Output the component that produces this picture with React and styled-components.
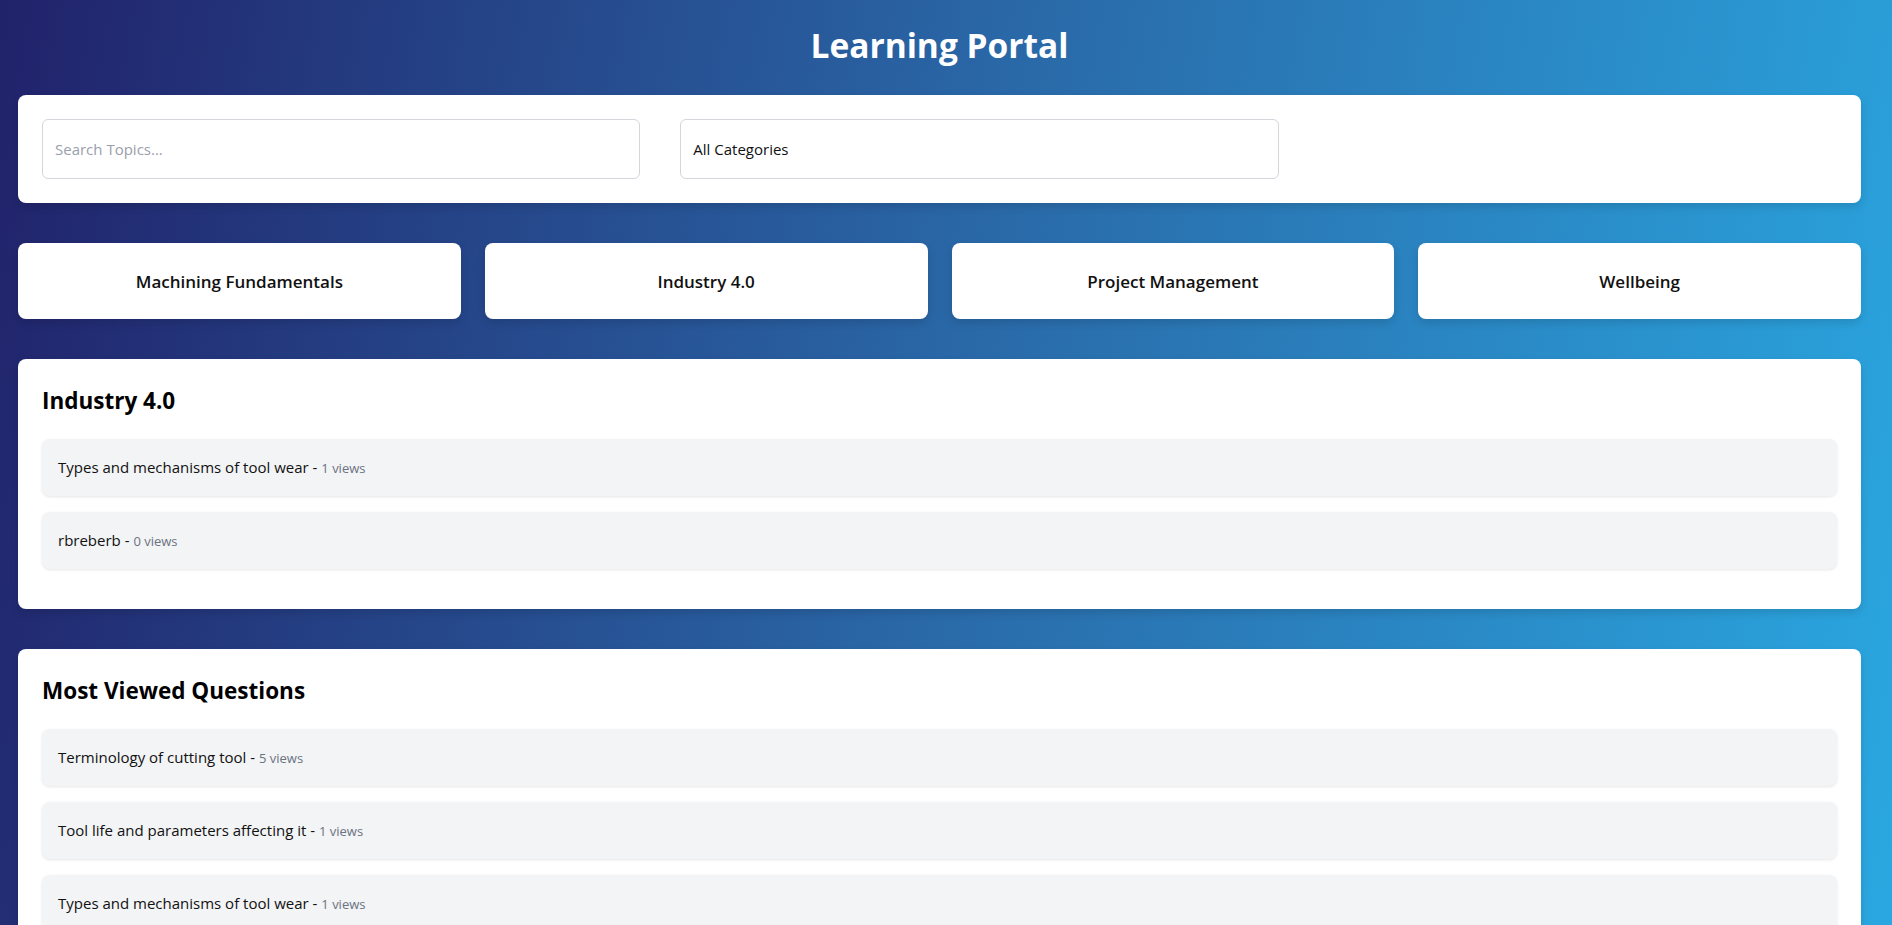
import React, { useState } from "react";
import styled, { createGlobalStyle } from "styled-components";

const GlobalStyle = createGlobalStyle`
  * { box-sizing: border-box; }
  html, body { margin: 0; padding: 0; }
  body {
    font-family: "Open Sans", "Noto Sans", Arial, sans-serif;
    color: #111;
    background: #22236a;
  }
`;

const Page = styled.div`
  min-height: 100vh;
  background: linear-gradient(100deg, #21226a 0%, #2a6aa9 50%, #2aaae3 100%);
  padding: 22px 31px 40px 18px;
`;

const Title = styled.h1`
  margin: 0 0 27px;
  text-align: center;
  color: #ffffff;
  font-size: 33.5px;
  font-weight: 700;
  line-height: 46px;
`;

const Stack = styled.div`
  display: flex;
  flex-direction: column;
  gap: 40px;
`;

const Card = styled.section`
  background: #ffffff;
  border-radius: 8px;
  box-shadow: 0 4px 8px rgba(0, 0, 0, 0.12);
  padding: ${(p) => (p.$list ? "24px 24px 40px" : "24px")};
`;

const FilterRow = styled.div`
  display: flex;
  gap: 40px;
`;

const fieldCss = `
  width: calc(100% / 3);
  height: 60px;
  border: 1px solid #d4d6dc;
  border-radius: 6px;
  padding: 0 12px;
  font-family: "Open Sans", "Noto Sans", Arial, sans-serif;
  font-size: 15px;
  color: #111;
  background: #fff;
  outline: none;
`;

const SearchInput = styled.input`
  ${fieldCss}
  &::placeholder { color: #9aa0ab; }
`;

const CategorySelect = styled.select`
  ${fieldCss}
  appearance: none;
  -webkit-appearance: none;
`;

const CategoryGrid = styled.div`
  display: grid;
  grid-template-columns: repeat(4, 1fr);
  gap: 24px;
`;

const CategoryCard = styled.button`
  height: 76px;
  border: none;
  border-radius: 8px;
  background: #ffffff;
  box-shadow: 0 4px 8px rgba(0, 0, 0, 0.12);
  font-family: "Open Sans", "Noto Sans", Arial, sans-serif;
  font-size: 17px;
  font-weight: 600;
  color: #111;
  cursor: pointer;
  display: flex;
  align-items: center;
  justify-content: center;
`;

const SectionTitle = styled.h2`
  margin: 0 0 20px;
  font-size: 22.5px;
  font-weight: 700;
  line-height: 36px;
  color: #000;
`;

const List = styled.ul`
  list-style: none;
  margin: 0;
  padding: 0;
  display: flex;
  flex-direction: column;
  gap: 16px;
`;

const Item = styled.li`
  background: #f3f4f6;
  border-radius: 8px;
  padding: 16px;
  font-size: 15px;
  line-height: 24px;
  color: #111;
  box-shadow: 0 1px 3px rgba(0, 0, 0, 0.1);
  cursor: pointer;
`;

const Views = styled.span`
  font-size: 13px;
  color: #6b7280;
`;

const categories = [
  "Machining Fundamentals",
  "Industry 4.0",
  "Project Management",
  "Wellbeing",
];

const industryItems = [
  { title: "Types and mechanisms of tool wear", views: 1 },
  { title: "rbreberb", views: 0 },
];

const mostViewed = [
  { title: "Terminology of cutting tool", views: 5 },
  { title: "Tool life and parameters affecting it", views: 1 },
  { title: "Types and mechanisms of tool wear", views: 1 },
  { title: "Introduction to metal cutting", views: 0 },
  { title: "rbreberb", views: 0 },
];

function QuestionList({ items }) {
  return (
    <List>
      {items.map((q, i) => (
        <Item key={i}>
          {q.title} - <Views>{q.views} views</Views>
        </Item>
      ))}
    </List>
  );
}

export default function App() {
  const [query, setQuery] = useState("");
  return (
    <>
      <GlobalStyle />
      <Page>
        <Title>Learning Portal</Title>
        <Stack>
          <Card>
            <FilterRow>
              <SearchInput
                placeholder="Search Topics..."
                value={query}
                onChange={(e) => setQuery(e.target.value)}
              />
              <CategorySelect defaultValue="all">
                <option value="all">All Categories</option>
                {categories.map((c) => (
                  <option key={c} value={c}>
                    {c}
                  </option>
                ))}
              </CategorySelect>
            </FilterRow>
          </Card>

          <CategoryGrid>
            {categories.map((c) => (
              <CategoryCard key={c}>{c}</CategoryCard>
            ))}
          </CategoryGrid>

          <Card $list>
            <SectionTitle>Industry 4.0</SectionTitle>
            <QuestionList items={industryItems} />
          </Card>

          <Card $list>
            <SectionTitle>Most Viewed Questions</SectionTitle>
            <QuestionList items={mostViewed} />
          </Card>
        </Stack>
      </Page>
    </>
  );
}
